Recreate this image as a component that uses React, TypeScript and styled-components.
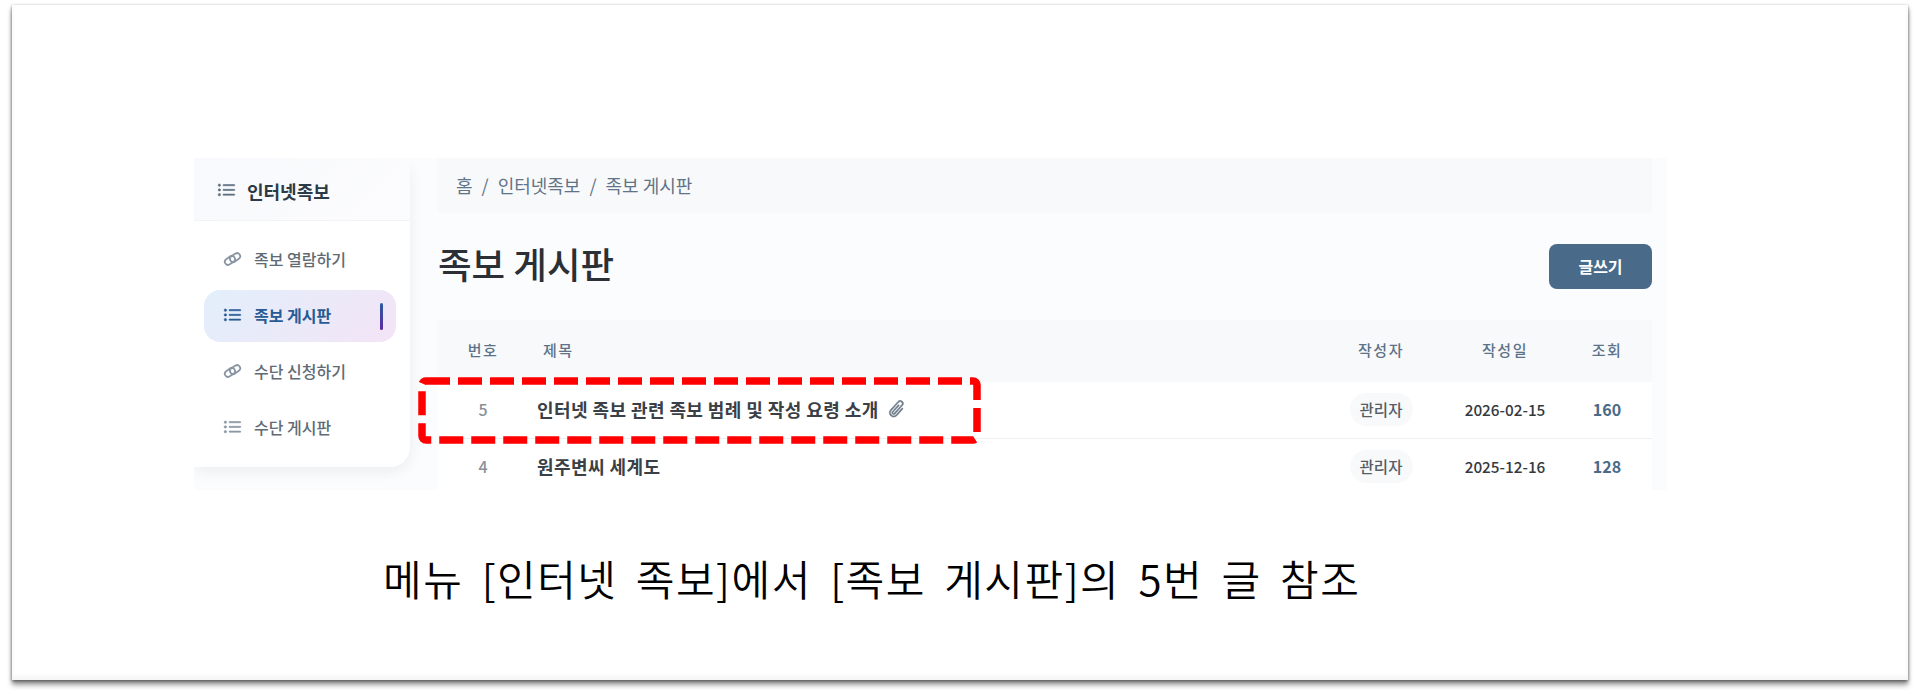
import React from "react";
import styled, { createGlobalStyle } from "styled-components";
import { BsListUl, BsPaperclip } from "react-icons/bs";

const FONT = `"Noto Sans CJK KR", "Noto Sans", sans-serif`;

const Global = createGlobalStyle`
  html, body { margin: 0; padding: 0; background: #ffffff; font-family: ${FONT}; }
`;

const Stage = styled.div`
  height: 697px;
  overflow: hidden;
  background: #ffffff;
  padding: 5px 12px 0;
  box-sizing: border-box;
`;

const Slide = styled.div`
  position: relative;
  height: 675px;
  box-sizing: border-box;
  padding: 153px 241px 0 182px;
  background: #ffffff;
  box-shadow: 0 5px 5px rgba(0, 0, 0, 0.4), 0 1px 3px rgba(0, 0, 0, 0.5),
    inset 0 -4px 4px rgba(0, 0, 0, 0.04);
`;

const Panel = styled.div`
  display: flex;
  align-items: flex-start;
  height: 332px;
  overflow: hidden;
  background: #fbfcfd;
`;

const Sidebar = styled.aside`
  flex: 0 0 216px;
  height: 309px;
  background: #ffffff;
  border-radius: 0 20px 20px 0;
  box-shadow: 0 4px 14px rgba(30, 50, 80, 0.08);
`;

const ListIcon = styled(BsListUl)`
  stroke: currentColor;
  stroke-width: 0.5px;
`;

const SidebarHeader = styled.div`
  display: flex;
  align-items: center;
  gap: 11px;
  height: 59px;
  padding: 3px 0 0 23px;
  background: linear-gradient(135deg, #f8f9fc, #fcfcfe);
  border-bottom: 1px solid #f1f3f5;
  color: #5d6f81;
  font-size: 19px;
`;

const SidebarTitle = styled.span`
  font-size: 18px;
  font-weight: 700;
  color: #2c3a47;
`;

const Menu = styled.nav`
  display: flex;
  flex-direction: column;
  gap: 4px;
  padding: 13px 14px 13px 10px;
`;

const MenuItem = styled.a<{ $active?: boolean }>`
  position: relative;
  display: flex;
  align-items: center;
  gap: 12px;
  height: 52px;
  box-sizing: border-box;
  padding: 0 0 2px 19px;
  border-radius: 16px;
  font-size: 16px;
  font-weight: ${(p) => (p.$active ? 700 : 500)};
  color: ${(p) => (p.$active ? "#285a95" : "#606a75")};
  background: ${(p) =>
    p.$active ? "linear-gradient(135deg, #e2effb, #f3e4f6)" : "transparent"};
`;

const MenuIconSlot = styled.span<{ $active?: boolean }>`
  display: inline-flex;
  align-items: center;
  width: 19px;
  font-size: 19px;
  color: ${(p) => (p.$active ? "#285a95" : "#8a96a3")};
`;

const ActiveMark = styled.span`
  position: absolute;
  right: 13px;
  top: 13px;
  width: 3.5px;
  height: 27px;
  border-radius: 2px;
  background: linear-gradient(180deg, #2b5c9c, #5f2b9f);
`;

const Main = styled.main`
  flex: 1;
  min-width: 0;
  padding: 0 15px 0 28px;
`;

const Breadcrumb = styled.div`
  display: flex;
  align-items: center;
  gap: 9px;
  height: 55px;
  box-sizing: border-box;
  padding: 0 0 2px 18px;
  background: #f8f9fb;
  font-size: 18px;
  color: #5f7488;
`;

const TitleRow = styled.div`
  display: flex;
  align-items: center;
  justify-content: space-between;
  height: 45px;
  margin: 31px 0;
`;

const PageTitle = styled.h1`
  margin: -6px 0 0;
  font-size: 36.5px;
  font-weight: 500;
  color: #2b2f36;
`;

const WriteButton = styled.button`
  width: 103px;
  height: 45px;
  padding: 0 0 2px;
  border: 0;
  border-radius: 8px;
  background: #4a6a8a;
  color: #ffffff;
  font-family: ${FONT};
  font-size: 16px;
  font-weight: 700;
`;

const columns = "90px 1fr 134px 114px 90px";

const TableHead = styled.div`
  display: grid;
  grid-template-columns: ${columns};
  align-items: center;
  height: 62px;
  box-sizing: border-box;
  padding-bottom: 4px;
  background: #f8f9fb;
  font-size: 15px;
  font-weight: 500;
  letter-spacing: 1.5px;
  color: #5c738a;
  text-align: center;
`;

const HeadTitle = styled.span`
  text-align: left;
  padding-left: 15px;
`;

const TableRow = styled.div`
  display: grid;
  grid-template-columns: ${columns};
  align-items: center;
  height: 57px;
  box-sizing: border-box;
  padding-bottom: 2px;
  background: #ffffff;
  border-bottom: 1px solid #eef0f2;
  text-align: center;
`;

const RowNumber = styled.span`
  font-size: 16px;
  font-weight: 500;
  color: #8a9097;
`;

const RowTitle = styled.span`
  display: flex;
  align-items: center;
  gap: 8px;
  padding: 0 0 0 9px;
  font-size: 18px;
  font-weight: 700;
  letter-spacing: 0.42px;
  color: #3a4046;
`;

const ClipIcon = styled(BsPaperclip)`
  font-size: 20px;
  color: #6c7a89;
  stroke: #6c7a89;
  stroke-width: 0.4px;
  transform: rotate(42deg);
`;

const AuthorCell = styled.span`
  display: flex;
  justify-content: center;
`;

const AuthorPill = styled.span`
  display: inline-flex;
  align-items: center;
  justify-content: center;
  width: 63px;
  height: 33px;
  border-radius: 17px;
  background: #f8f9fa;
  font-size: 15.5px;
  font-weight: 500;
  color: #555d66;
`;

const DateCell = styled.span`
  font-size: 15.3px;
  font-weight: 500;
  color: #343a40;
`;

const Views = styled.span`
  font-size: 16px;
  font-weight: 700;
  color: #4a6a8a;
`;

const Caption = styled.p`
  margin: 64px 0 0 189px;
  font-size: 42px;
  line-height: 48px;
  font-weight: 350;
  letter-spacing: 1.5px;
  word-spacing: 7.5px;
  white-space: nowrap;
  color: #000000;
`;

const Callout = styled.svg`
  position: absolute;
  left: 402px;
  top: 368px;
`;

const LinkIcon = () => (
  <svg width="20" height="18" viewBox="0 0 20 18" fill="none" stroke="currentColor" strokeWidth="1.9">
    <rect x="1.5" y="7.2" width="11.5" height="6.6" rx="3.3" transform="rotate(-35 7.25 10.5)" />
    <rect x="7" y="4.2" width="11.5" height="6.6" rx="3.3" transform="rotate(-35 12.75 7.5)" />
  </svg>
);

const rows = [
  { no: 5, title: "인터넷 족보 관련 족보 범례 및 작성 요령 소개", clip: true, date: "2026-02-15", views: 160 },
  { no: 4, title: "원주변씨 세계도", clip: false, date: "2025-12-16", views: 128 },
];

const menu = [
  { label: "족보 열람하기", icon: <LinkIcon /> },
  { label: "족보 게시판", icon: <ListIcon />, active: true },
  { label: "수단 신청하기", icon: <LinkIcon /> },
  { label: "수단 게시판", icon: <ListIcon /> },
];

export default function App() {
  return (
    <>
      <Global />
      <Stage>
        <Slide>
          <Panel>
            <Sidebar>
              <SidebarHeader>
                <ListIcon />
                <SidebarTitle>인터넷족보</SidebarTitle>
              </SidebarHeader>
              <Menu>
                {menu.map((m) => (
                  <MenuItem key={m.label} $active={m.active}>
                    <MenuIconSlot $active={m.active}>{m.icon}</MenuIconSlot>
                    {m.label}
                    {m.active && <ActiveMark />}
                  </MenuItem>
                ))}
              </Menu>
            </Sidebar>
            <Main>
              <Breadcrumb>
                <span>홈</span>
                <span>/</span>
                <span>인터넷족보</span>
                <span>/</span>
                <span>족보 게시판</span>
              </Breadcrumb>
              <TitleRow>
                <PageTitle>족보 게시판</PageTitle>
                <WriteButton>글쓰기</WriteButton>
              </TitleRow>
              <TableHead>
                <span>번호</span>
                <HeadTitle>제목</HeadTitle>
                <span>작성자</span>
                <span>작성일</span>
                <span>조회</span>
              </TableHead>
              {rows.map((r) => (
                <TableRow key={r.no}>
                  <RowNumber>{r.no}</RowNumber>
                  <RowTitle>
                    {r.title}
                    {r.clip && <ClipIcon />}
                  </RowTitle>
                  <AuthorCell>
                    <AuthorPill>관리자</AuthorPill>
                  </AuthorCell>
                  <DateCell>{r.date}</DateCell>
                  <Views>{r.views}</Views>
                </TableRow>
              ))}
            </Main>
          </Panel>
          <Caption>메뉴 [인터넷 족보]에서 [족보 게시판]의 5번 글 참조</Caption>
          <Callout width="568" height="76" viewBox="0 0 568 76">
            <rect x="8" y="8" width="555" height="59" rx="4" fill="none" stroke="#ff0000" strokeWidth="7.5" strokeDasharray="24 8" />
          </Callout>
        </Slide>
      </Stage>
    </>
  );
}
